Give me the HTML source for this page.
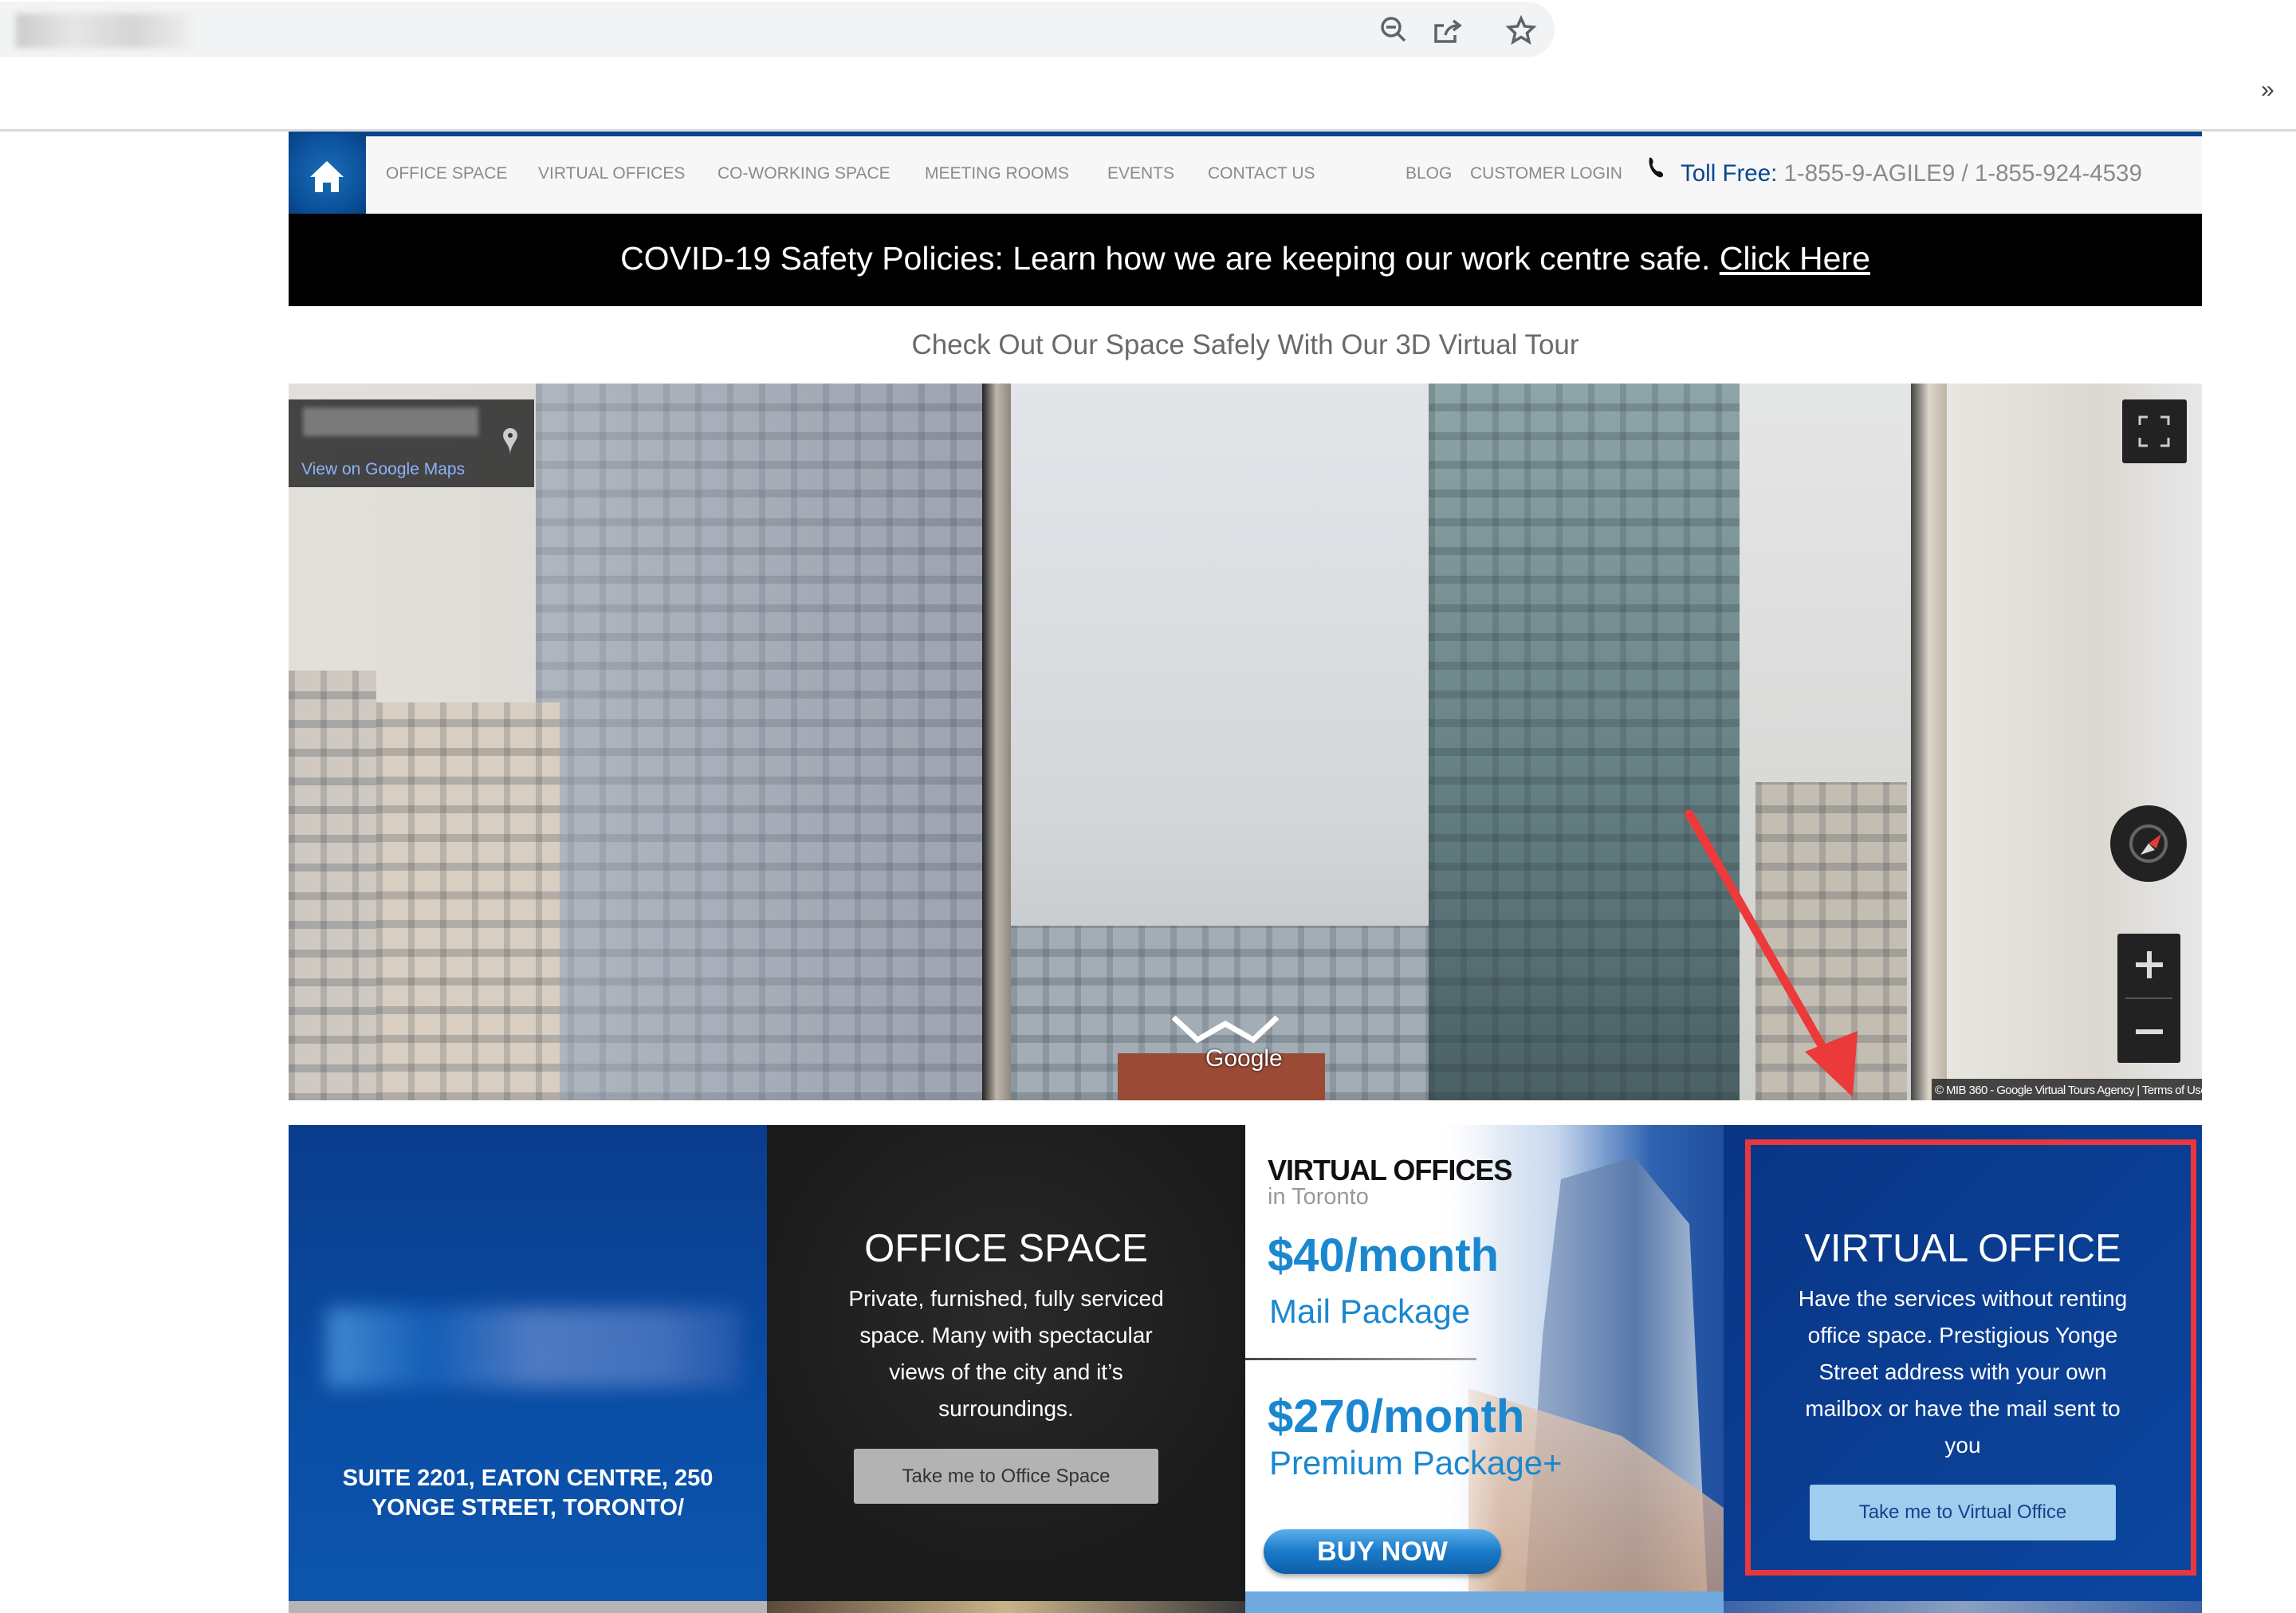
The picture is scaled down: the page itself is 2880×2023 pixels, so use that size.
<!DOCTYPE html>
<html><head><meta charset="utf-8">
<style>
*{margin:0;padding:0;box-sizing:border-box}
body{width:2880px;height:2023px;overflow:hidden;background:#fff;font-family:"Liberation Sans",sans-serif;position:relative}
.a{position:absolute}
.nav a{position:absolute;top:206px;font-size:21px;color:#8a8a8a;text-decoration:none;white-space:nowrap}
.win{background-image:repeating-linear-gradient(0deg,rgba(40,50,60,.22) 0 10px,transparent 10px 36px),repeating-linear-gradient(90deg,rgba(40,50,60,.18) 0 8px,transparent 8px 40px)}
.c{text-align:center;color:#fff}
</style></head><body>
<div class="a" style="left:0;top:2px;width:1950px;height:70px;background:#f1f3f4;border-radius:0 36px 36px 0"></div>
<div class="a" style="left:20px;top:17px;width:220px;height:43px;background:linear-gradient(90deg,#ccc,#e6e6e6,#d5d5d5,#eee);filter:blur(4px)"></div>
<svg class="a" style="left:1725px;top:18px" width="210" height="40" viewBox="0 0 210 40" fill="none" stroke="#5f6368" stroke-width="3.5">
<circle cx="20" cy="16" r="11"/><path d="M28 24l9 9M14 16h12"/>
<path d="M86 14h-10v20h24v-8M88 26c2-8 8-12 16-12M98 8l8 6-8 6"/>
<path d="M183 5l4.5 10 11 1-8 7.5 2.5 11-10-6-10 6 2.5-11-8-7.5 11-1z"/>
</svg>
<div class="a" style="left:2836px;top:96px;font-size:30px;color:#444">»</div>
<div class="a" style="left:0;top:162px;width:2880px;height:3px;background:#d8d9db"></div>
<div class="a" style="left:362px;top:165px;width:2400px;height:6px;background:#0a4590"></div>
<div class="a" style="left:362px;top:171px;width:2400px;height:97px;background:#f7f7f7"></div>
<div class="a" style="left:362px;top:167px;width:97px;height:101px;background:radial-gradient(circle at 50% 50%,#1a6fb8,#0b4f99 70%,#083f80)"></div>
<svg class="a" style="left:386px;top:199px" width="48" height="44" viewBox="0 0 48 44"><path d="M24 3L3 23h6v19h10V30h10v12h10V23h6z" fill="#fff"/></svg>
<div class="nav">
<a style="left:484px">OFFICE SPACE</a><a style="left:675px">VIRTUAL OFFICES</a><a style="left:900px">CO-WORKING SPACE</a><a style="left:1160px">MEETING ROOMS</a><a style="left:1389px">EVENTS</a><a style="left:1515px">CONTACT US</a><a style="left:1763px">BLOG</a><a style="left:1844px">CUSTOMER LOGIN</a>
</div>
<svg class="a" style="left:2065px;top:195px" width="28" height="30" viewBox="0 0 28 30"><path d="M4 3c3-2 6 5 4 7-2 2 4 10 7 10 2-1 7 2 6 5-1 3-4 3-7 1C7 22 2 12 4 3z" fill="#111"/></svg>
<div class="a" style="left:2108px;top:201px;font-size:29.5px;color:#8a8a8a;white-space:nowrap"><span style="color:#0a4590">Toll Free:</span> 1-855-9-AGILE9 / 1-855-924-4539</div>
<div class="a" style="left:362px;top:268px;width:2400px;height:116px;background:#000"></div>
<div class="a c" style="left:362px;top:301px;width:2400px;font-size:41px;white-space:nowrap">COVID-19 Safety Policies: Learn how we are keeping our work centre safe. <u>Click Here</u></div>
<div class="a" style="left:362px;top:413px;width:2400px;text-align:center;font-size:35px;color:#6a6a6a">Check Out Our Space Safely With Our 3D Virtual Tour</div>
<div class="a" style="left:362px;top:481px;width:2400px;height:899px;overflow:hidden;background:linear-gradient(#dde1e6,#d0d4d8)">
 <div class="a" style="left:0;top:0;width:870px;height:899px;background:linear-gradient(90deg,#e3e0db,#d6d4d2)"></div>
 <div class="a win" style="left:0;top:360px;width:110px;height:540px;background-color:#cfc9c2"></div>
 <div class="a win" style="left:310px;top:0;width:560px;height:899px;background-color:#a6adb7"></div>
 <div class="a" style="left:310px;top:0;width:560px;height:899px;background:linear-gradient(90deg,rgba(190,195,205,.4),rgba(120,130,150,.2))"></div>
 <div class="a win" style="left:110px;top:400px;width:230px;height:499px;background-color:#d8cfc2"></div>
 <div class="a" style="left:870px;top:0;width:36px;height:899px;background:linear-gradient(90deg,#222,#bdb6aa,#8f887f)"></div>
 <div class="a" style="left:906px;top:0;width:530px;height:899px;background:linear-gradient(#e2e5e9,#d4d7da 60%,#b9bcbf)"></div>
 <div class="a win" style="left:906px;top:680px;width:530px;height:219px;background-color:#a3adb6"></div>
 <div class="a" style="left:1040px;top:840px;width:260px;height:60px;background:#9a4a35"></div>
 <div class="a" style="left:1430px;top:0;width:390px;height:899px;background:linear-gradient(#8fa6a8,#627d80 60%,#4a6065)"></div>
 <div class="a win" style="left:1430px;top:0;width:390px;height:899px"></div>
 <div class="a" style="left:1820px;top:0;width:215px;height:899px;background:linear-gradient(#e5e6e6,#cfcfcc)"></div>
 <div class="a win" style="left:1840px;top:500px;width:190px;height:399px;background-color:#c4bdb2"></div>
 <div class="a" style="left:2035px;top:0;width:45px;height:899px;background:linear-gradient(90deg,#444,#ddd6ca,#bfb5a6)"></div>
 <div class="a" style="left:2080px;top:0;width:320px;height:899px;background:linear-gradient(90deg,#e8e6e1,#dcd8d0 60%,#e6e8ea)"></div>
 <div class="a" style="left:0;top:20px;width:308px;height:110px;background:rgba(40,40,40,.85)"></div>
 <div class="a" style="left:18px;top:30px;width:220px;height:36px;background:#7a7a7a;filter:blur(3px)"></div>
 <svg class="a" style="left:266px;top:54px" width="24" height="38" viewBox="0 0 24 38"><path d="M12 2a9 9 0 0 0-9 9c0 7 9 12 9 25 0-13 9-18 9-25a9 9 0 0 0-9-9z" fill="#ccc"/><circle cx="12" cy="11" r="3" fill="#333"/></svg>
 <div class="a" style="left:16px;top:96px;font-size:21px;color:#8ab4f8">View on Google Maps</div>
 <div class="a" style="left:2300px;top:20px;width:81px;height:80px;background:#222;border-radius:3px"></div>
 <svg class="a" style="left:2320px;top:40px" width="40" height="40" viewBox="0 0 40 40" fill="none" stroke="#ccc" stroke-width="3"><path d="M2 12V2h10M28 2h10v10M38 28v10H28M12 38H2V28"/></svg>
 <div class="a" style="left:2285px;top:529px;width:96px;height:96px;border-radius:50%;background:#222"></div>
 <svg class="a" style="left:2300px;top:544px" width="66" height="66" viewBox="0 0 66 66"><circle cx="33" cy="33" r="22" fill="none" stroke="#666" stroke-width="4"/><path d="M33 33l16-12-6 18z" fill="#e53935"/><path d="M33 33l-10 14 18-6z" fill="#ddd"/></svg>
 <div class="a" style="left:2294px;top:690px;width:79px;height:162px;background:#222;border-radius:3px"></div>
 <div class="a" style="left:2304px;top:770px;width:59px;height:2px;background:#555"></div>
 <div class="a" style="left:2317px;top:726px;width:34px;height:6px;background:#ddd"></div>
 <div class="a" style="left:2331px;top:712px;width:6px;height:34px;background:#ddd"></div>
 <div class="a" style="left:2317px;top:810px;width:34px;height:6px;background:#ddd"></div>
 <svg class="a" style="left:1100px;top:785px" width="150" height="50" viewBox="0 0 150 50" fill="none" stroke="#fff" stroke-width="7"><path d="M10 10l30 28 35-20 35 20 30-28"/></svg>
 <div class="a" style="left:1150px;top:830px;font-size:30px;color:#fff;text-shadow:0 0 3px #000">Google</div>
 <div class="a" style="left:2061px;top:872px;width:339px;height:27px;background:rgba(40,40,40,.85);font-size:15px;color:#fff;white-space:nowrap;padding:6px 0 0 4px;letter-spacing:-.6px;overflow:hidden">© MIB 360 - Google Virtual Tours Agency | Terms of Use | Report a problem</div>
 <svg class="a" style="left:0;top:0" width="2400" height="899"><path d="M1757 540L1940 860" stroke="#ec3a3a" stroke-width="11" stroke-linecap="round"/><path d="M1902 838L1962 895L1968 812z" fill="#ec3a3a"/></svg>
</div>
<div class="a" style="left:362px;top:1411px;width:600px;height:612px;background:linear-gradient(#0a3c8c,#0a4ea6 60%,#0d55ad)"></div>
<div class="a" style="left:410px;top:1640px;width:520px;height:100px;background:linear-gradient(90deg,#5aa5e6,#1a66c0 25%,#6b8fd0 50%,#5a80c8 80%,#2a5cb0);filter:blur(12px);opacity:.7"></div>
<div class="a c" style="left:362px;top:1836px;width:600px;font-size:29px;font-weight:bold;line-height:37px">SUITE 2201, EATON CENTRE, 250<br>YONGE STREET, TORONTO/</div>
<div class="a" style="left:962px;top:1411px;width:600px;height:612px;background:radial-gradient(circle at 50% 40%,#2a2a2a,#1a1a1a 70%)"></div>
<div class="a c" style="left:962px;top:1538px;width:600px;font-size:49px">OFFICE SPACE</div>
<div class="a c" style="left:1040px;top:1606px;width:444px;font-size:28px;line-height:46px">Private, furnished, fully serviced space. Many with spectacular views of the city and it’s surroundings.</div>
<div class="a" style="left:1071px;top:1817px;width:382px;height:69px;background:#b3b3b3;border-radius:3px;font-size:24px;color:#333;text-align:center;line-height:69px">Take me to Office Space</div>
<div class="a" style="left:1562px;top:1411px;width:600px;height:612px;background:linear-gradient(90deg,#fff 40%,#c8d8ee 65%,#2f63b0 85%,#1f4f9e);overflow:hidden">
 <div class="a" style="left:350px;top:40px;width:230px;height:560px;background:linear-gradient(90deg,#8ea4c4,#5a7aa8 60%,#c8d3e0);clip-path:polygon(20% 5%,60% 0,90% 15%,100% 100%,0 100%,10% 40%);opacity:.85"></div>
 <div class="a" style="left:280px;top:300px;width:320px;height:300px;background:linear-gradient(#e8d0c0,#c89a78);clip-path:polygon(0 10%,60% 30%,100% 60%,100% 100%,0 100%);opacity:.75"></div>
 <div class="a" style="left:0;top:0;width:320px;height:585px;background:linear-gradient(90deg,#fff 70%,rgba(255,255,255,0))"></div>
 <div class="a" style="left:28px;top:36px;font-size:36px;font-weight:bold;color:#111;letter-spacing:-1px">VIRTUAL OFFICES</div>
 <div class="a" style="left:28px;top:74px;font-size:29px;color:#999">in Toronto</div>
 <div class="a" style="left:28px;top:130px;font-size:58px;font-weight:bold;color:#1a88d0">$40/month</div>
 <div class="a" style="left:30px;top:210px;font-size:42px;color:#1a88d0">Mail Package</div>
 <div class="a" style="left:0;top:292px;width:290px;height:3px;background:linear-gradient(90deg,#444,#aaa)"></div>
 <div class="a" style="left:28px;top:332px;font-size:58px;font-weight:bold;color:#1a88d0">$270/month</div>
 <div class="a" style="left:30px;top:400px;font-size:42px;color:#1a88d0;white-space:nowrap">Premium Package+</div>
 <div class="a" style="left:23px;top:507px;width:298px;height:56px;border-radius:28px;background:linear-gradient(#5ab0ec,#1a7ac8 50%,#0d5fa8);box-shadow:0 4px 6px rgba(0,0,0,.3);color:#fff;font-size:34px;font-weight:bold;text-align:center;line-height:56px">BUY NOW</div>
 <div class="a" style="left:0;top:585px;width:600px;height:30px;background:#6fa9dd"></div>
</div>
<div class="a" style="left:2162px;top:1411px;width:600px;height:612px;background:linear-gradient(135deg,#0a3585,#0b47a0)"></div>
<div class="a" style="left:2189px;top:1429px;width:566px;height:547px;border:7px solid #e8383d"></div>
<div class="a c" style="left:2162px;top:1538px;width:600px;font-size:49px">VIRTUAL OFFICE</div>
<div class="a c" style="left:2242px;top:1606px;width:440px;font-size:28px;line-height:46px">Have the services without renting office space. Prestigious Yonge Street address with your own mailbox or have the mail sent to you</div>
<div class="a" style="left:2270px;top:1862px;width:384px;height:70px;background:#9fcdee;border-radius:3px;font-size:24px;color:#1b3d8c;text-align:center;line-height:70px">Take me to Virtual Office</div>
<div class="a" style="left:362px;top:2008px;width:600px;height:15px;background:#b5b5b5"></div>
<div class="a" style="left:962px;top:2008px;width:600px;height:15px;background:linear-gradient(90deg,#5a4a3a,#c9b48a,#3a3a3a)"></div>
<div class="a" style="left:2162px;top:2008px;width:600px;height:15px;background:linear-gradient(90deg,#3c64a8,#8aa0c0,#3c64a8)"></div>
</body></html>
